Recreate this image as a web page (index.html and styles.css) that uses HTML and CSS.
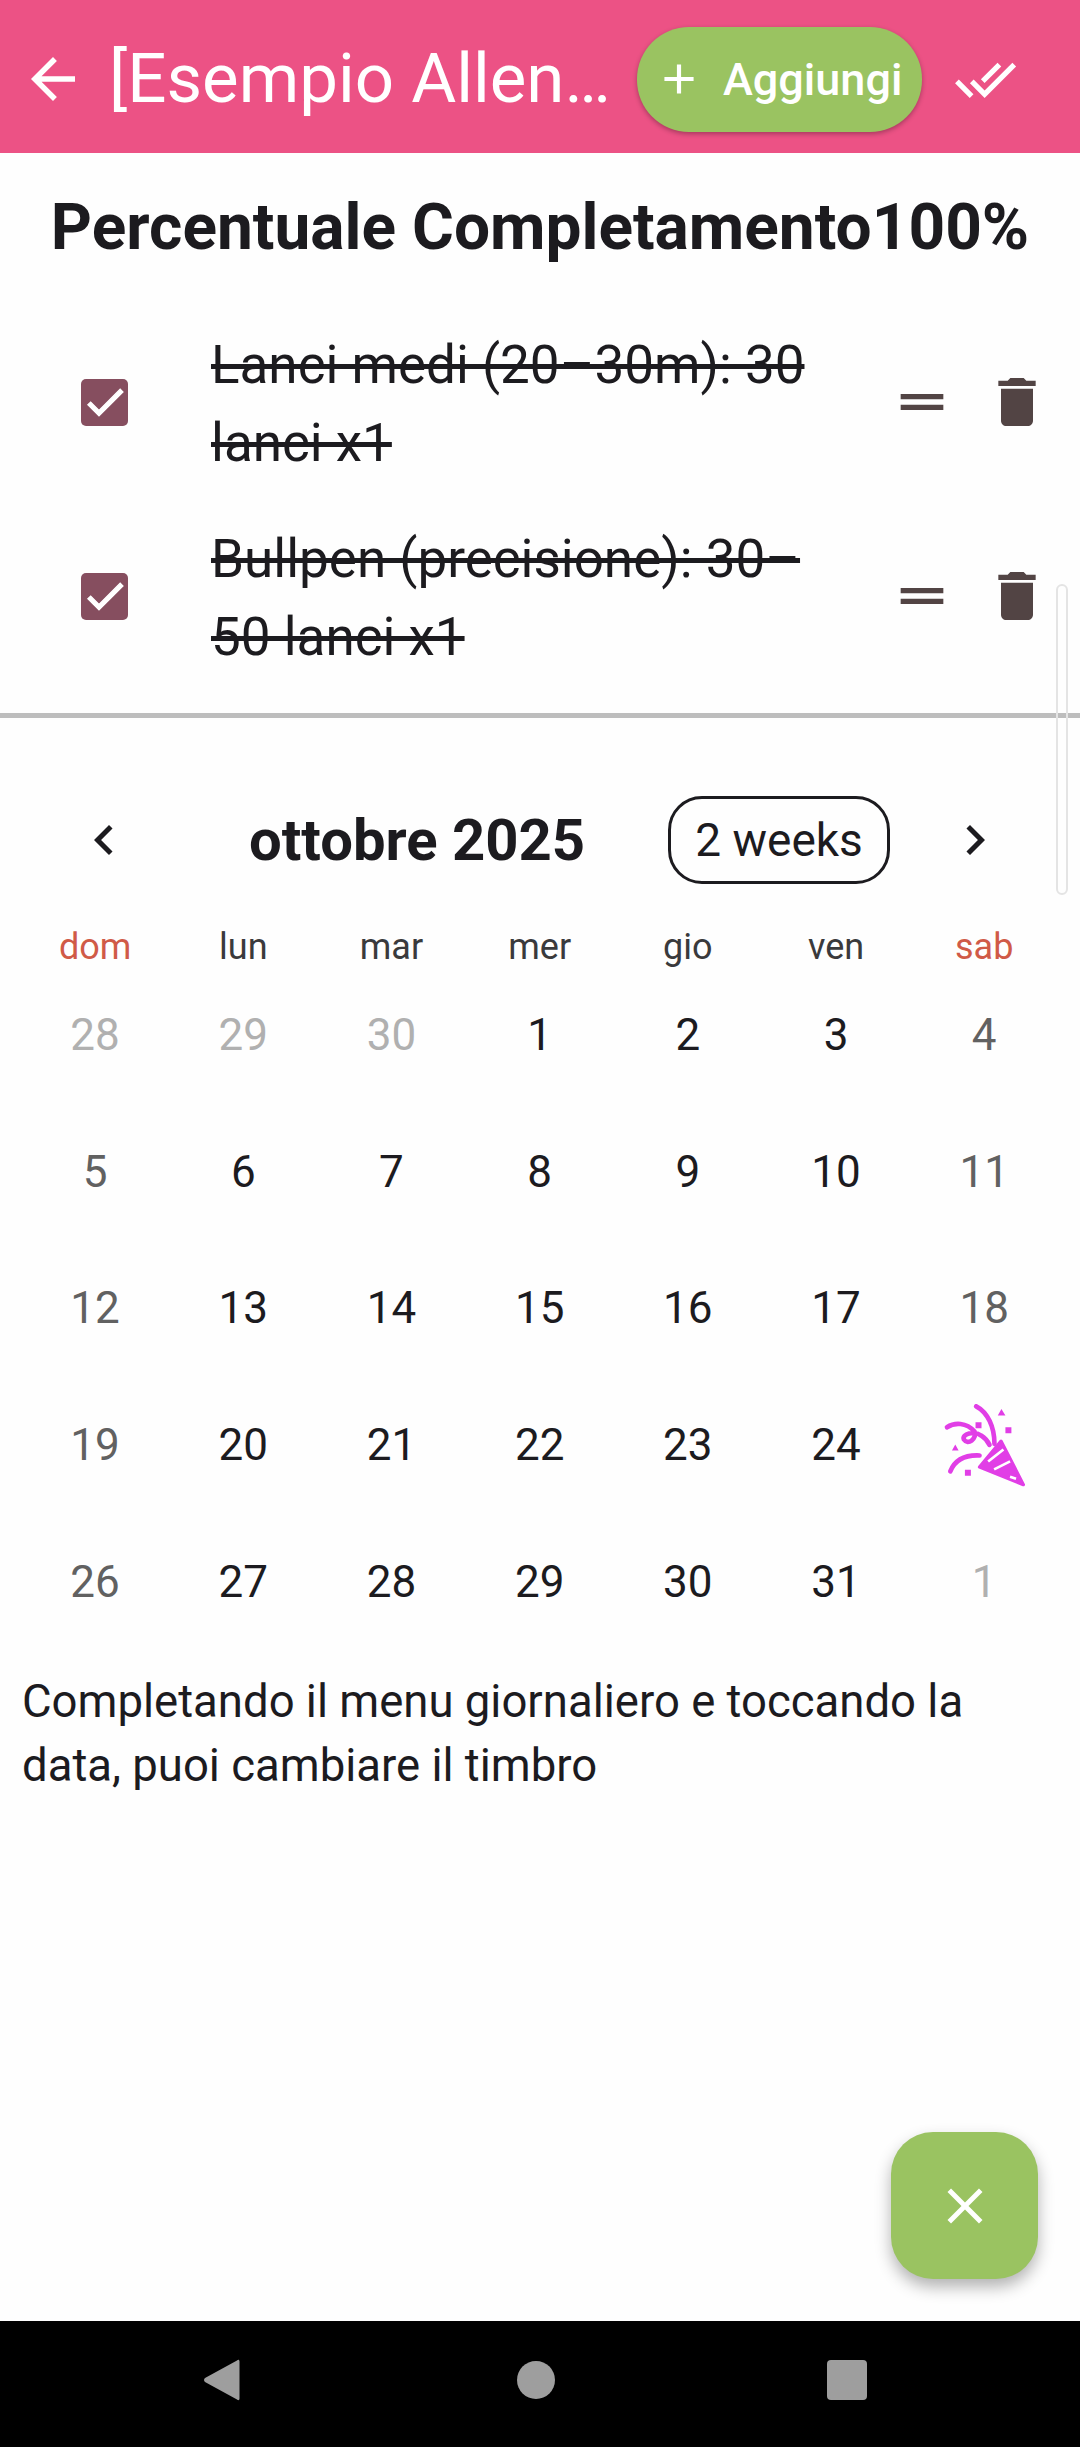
FILE: index.html
```html
<!DOCTYPE html>
<html lang="it">
<head>
    <meta charset="UTF-8">
    <meta name="viewport" content="width=device-width, initial-scale=1.0">
    <title>Esempio Allenamento</title>
    <link rel="stylesheet" href="styles.css">
</head>
<body>
    <div class="screen">
        <header class="app-bar">
            <svg class="back-icon" viewBox="0 0 24 24"><path d="M20 11H7.83l5.59-5.59L12 4l-8 8 8 8 1.41-1.41L7.83 13H20v-2z"/></svg>
            <div class="app-title">[Esempio Allen…</div>
            <div class="add-button">
                <svg class="add-icon" viewBox="0 0 24 24"><path d="M19 13h-6v6h-2v-6H5v-2h6V5h2v6h6v2z"/></svg>
                <span>Aggiungi</span>
            </div>
            <svg class="done-icon" viewBox="0 0 24 24"><path d="M18 7l-1.41-1.41-6.34 6.34 1.41 1.41L18 7zm4.24-1.41L11.66 16.17 7.48 12l-1.41 1.41L11.66 19l12-12-1.42-1.41zM.41 13.41L6 19l1.41-1.41L1.83 12 .41 13.41z"/></svg>
        </header>

        <main class="content">
            <h2 class="progress-title"><span>Percentuale Completamento</span><span>100%</span></h2>

            <div class="task-list">
                <div class="task-row">
                    <div class="checkbox"><svg viewBox="0 0 24 24"><path d="M9 16.17L4.83 12l-1.42 1.41L9 19 21 7l-1.41-1.41z"/></svg></div>
                    <div class="task-text">Lanci medi (20–30m): 30 lanci x1</div>
                    <svg class="row-icon" viewBox="0 0 24 24"><path d="M20 9H4v2h16V9zm0 4H4v2h16v-2z"/></svg>
                    <svg class="row-icon trash" viewBox="0 0 24 24"><path d="M6 19c0 1.1.9 2 2 2h8c1.1 0 2-.9 2-2V7H6v12zM19 4h-3.5l-1-1h-5l-1 1H5v2h14V4z"/></svg>
                </div>
                <div class="task-row">
                    <div class="checkbox"><svg viewBox="0 0 24 24"><path d="M9 16.17L4.83 12l-1.42 1.41L9 19 21 7l-1.41-1.41z"/></svg></div>
                    <div class="task-text">Bullpen (precisione): 30–50 lanci x1</div>
                    <svg class="row-icon" viewBox="0 0 24 24"><path d="M20 9H4v2h16V9zm0 4H4v2h16v-2z"/></svg>
                    <svg class="row-icon trash" viewBox="0 0 24 24"><path d="M6 19c0 1.1.9 2 2 2h8c1.1 0 2-.9 2-2V7H6v12zM19 4h-3.5l-1-1h-5l-1 1H5v2h14V4z"/></svg>
                </div>
            </div>

            <div class="divider"></div>

            <section class="calendar">
                <div class="calendar-header">
                    <svg class="chevron" viewBox="0 0 24 24"><path d="M15.41 7.41L14 6l-6 6 6 6 1.41-1.41L10.83 12z"/></svg>
                    <div class="month-title">ottobre 2025</div>
                    <div class="format-button">2 weeks</div>
                    <svg class="chevron" viewBox="0 0 24 24"><path d="M8.59 16.59L10 18l6-6-6-6-1.41 1.41L13.17 12z"/></svg>
                </div>

                <div class="week-row">
                    <div class="red">dom</div><div>lun</div><div>mar</div><div>mer</div><div>gio</div><div>ven</div><div class="red">sab</div>
                </div>

                <div class="day-grid">
                    <div class="out">28</div><div class="out">29</div><div class="out">30</div><div>1</div><div>2</div><div>3</div><div class="weekend">4</div>
                    <div class="weekend">5</div><div>6</div><div>7</div><div>8</div><div>9</div><div>10</div><div class="weekend">11</div>
                    <div class="weekend">12</div><div>13</div><div>14</div><div>15</div><div>16</div><div>17</div><div class="weekend">18</div>
                    <div class="weekend">19</div><div>20</div><div>21</div><div>22</div><div>23</div><div>24</div>
                    <div>
                        <svg class="stamp" viewBox="130 95 250 250">
                            <path class="stamp-cone" d="M305 207L372 338L240 285Z"/>
                            <path class="stamp-stripe" d="M266 268L312 232M284 292L332 268M332 314L350 320"/>
                            <path class="stamp-line" d="M230 102C265 120 285 165 285 215"/>
                            <path class="stamp-line" d="M142 165C165 150 200 150 225 178C232 200 205 220 193 202C185 185 225 175 245 190C258 198 265 208 270 218"/>
                            <path class="stamp-line" d="M152 298C165 265 195 248 240 250"/>
                            <path class="stamp-bit" d="M228 150h18v18h-18zM318 165h18v18h-18zM196 293h18v18h-18zM306 110l12 20h-23zM167 217l10 18h-20z"/>
                        </svg>
                    </div>
                    <div class="weekend">26</div><div>27</div><div>28</div><div>29</div><div>30</div><div>31</div><div class="out">1</div>
                </div>
            </section>

            <p class="hint">Completando il menu giornaliero e toccando la data, puoi cambiare il timbro</p>

            <!-- sopra il contenuto -->
            <div class="scroll-thumb"></div>
            <div class="fab">
                <svg viewBox="0 0 24 24"><path d="M19 6.41L17.59 5 12 10.59 6.41 5 5 6.41 10.59 12 5 17.59 6.41 19 12 13.41 17.59 19 19 17.59 13.41 12z"/></svg>
            </div>
        </main>

        <nav class="nav-bar">
            <svg viewBox="0 0 40 44"><path d="M36 2.5c1.2-1.2 2.5-.6 2.5 1v37c0 1.600-1.300 2.200-2.500 1L4 24c-1.300-1.200-1.300-2.800 0-4z"/></svg>
            <svg viewBox="0 0 40 44"><circle cx="20" cy="22" r="19"/></svg>
            <svg viewBox="0 0 40 44"><rect x="0" y="2" width="40" height="40" rx="4"/></svg>
        </nav>
    </div>
</body>
</html>
```

FILE: styles.css
```css
body {
    margin: 0;
    font-family: 'Roboto', sans-serif;
    color: #1c1b1f;
    background: #fefefe;
}

.screen {
    width: 1080px;
    height: 2447px;
    display: flex;
    flex-direction: column;
    overflow: hidden;
}

/* barra in alto */
.app-bar {
    height: 153px;
    flex-shrink: 0;
    background: #ec5285;
    display: flex;
    align-items: center;
    padding: 5px 0 0 20px;
    box-sizing: border-box;
    color: white;
}
.back-icon {
    width: 66px;
    height: 66px;
    fill: white;
    flex-shrink: 0;
}
.app-title {
    width: 510px;
    margin-left: 23px;
    font-size: 69px;
    line-height: 80px;
    white-space: nowrap;
    flex-shrink: 0;
}
.add-button {
    width: 285px;
    height: 105px;
    margin-left: 18px;
    background: #9ac361;
    border-radius: 52px;
    box-shadow: 0 2px 5px rgba(0, 0, 0, 0.3);
    display: flex;
    align-items: center;
    padding-left: 17px;
    box-sizing: border-box;
    font-size: 45px;
    font-weight: 500;
    flex-shrink: 0;
}
.add-icon {
    width: 50px;
    height: 50px;
    fill: white;
    margin-right: 19px;
}
.done-icon {
    width: 63px;
    height: 63px;
    fill: white;
    margin-left: 32px;
    flex-shrink: 0;
}

.content {
    flex: 1;
    position: relative;
}

.progress-title {
    margin: 0;
    padding-top: 40px;
    height: 70px;
    display: flex;
    justify-content: center;
    font-size: 64px;
    line-height: 70px;
    font-weight: 700;
    white-space: nowrap;
}

/* lista esercizi */
.task-list {
    padding-top: 42px;
}
.task-row {
    height: 194px;
    display: flex;
    align-items: center;
    padding-left: 81px;
}
.checkbox {
    width: 47px;
    height: 47px;
    border-radius: 5px;
    background: #864e5f;
    flex-shrink: 0;
    display: flex;
    align-items: center;
    justify-content: center;
}
.checkbox svg {
    width: 48px;
    height: 48px;
    fill: white;
    stroke: white;
    stroke-width: 0.6;
    flex-shrink: 0;
}
.task-text {
    width: 610px;
    margin-left: 83px;
    padding-top: 3px;
    font-size: 53px;
    line-height: 78px;
    text-decoration: line-through;
    flex-shrink: 0;
}
.row-icon {
    width: 64px;
    height: 64px;
    fill: #524444;
    margin-left: 69px;
    flex-shrink: 0;
}
.row-icon.trash {
    margin-left: 31px;
}

.divider {
    height: 5px;
    background: #bdbdbd;
    margin-top: 20px;
}

/* calendario */
.calendar {
    padding: 0 21px;
}
.calendar-header {
    height: 88px;
    margin-top: 78px;
    display: flex;
    align-items: center;
}
.chevron {
    width: 60px;
    height: 60px;
    fill: #1c1b1f;
    flex-shrink: 0;
}
.calendar-header .chevron:first-child {
    margin-left: 53px;
}
.month-title {
    margin-left: 115px;
    width: 419px;
    font-size: 58px;
    font-weight: 700;
    white-space: nowrap;
    flex-shrink: 0;
}
.format-button {
    width: 222px;
    height: 88px;
    box-sizing: border-box;
    border: 3px solid #1c1b1f;
    border-radius: 34px;
    display: flex;
    align-items: center;
    justify-content: center;
    font-size: 46px;
    flex-shrink: 0;
}
.format-button + .chevron {
    margin-left: 55px;
}

.week-row {
    display: grid;
    grid-template-columns: repeat(7, 148.2px);
    margin-top: 41px;
    height: 44px;
    line-height: 44px;
    text-align: center;
    font-size: 36px;
    color: #3a3a3c;
}
.week-row .red {
    color: #d05a47;
}

.day-grid {
    display: grid;
    grid-template-columns: repeat(7, 148.2px);
    grid-auto-rows: 136.6px;
    margin-top: -2px;
    text-align: center;
    font-size: 44px;
    color: #1c1b1f;
}
.day-grid > div {
    display: flex;
    align-items: center;
    justify-content: center;
}
.day-grid .out {
    color: #b0b0b0;
}
.day-grid .weekend {
    color: #616161;
}
.stamp {
    width: 83px;
    height: 83px;
}
.stamp-cone {
    fill: #e13ee6;
    stroke: #e13ee6;
    stroke-width: 10;
    stroke-linejoin: round;
}
.stamp-stripe {
    fill: none;
    stroke: white;
    stroke-width: 8;
}
.stamp-line {
    fill: none;
    stroke: #e13ee6;
    stroke-width: 14;
    stroke-linecap: round;
}
.stamp-bit {
    fill: #e13ee6;
}

.hint {
    margin: 20px 22px 0;
    font-size: 45.5px;
    line-height: 64px;
}

.scroll-thumb {
    position: absolute;
    top: 431px;
    left: 1056px;
    width: 12px;
    height: 311px;
    box-sizing: border-box;
    border: 2px solid #e4e4e4;
    border-radius: 6px;
}
.fab {
    position: absolute;
    right: 42px;
    bottom: 42px;
    width: 147px;
    height: 147px;
    border-radius: 42px;
    background: #9ac361;
    box-shadow: 0 8px 16px rgba(0, 0, 0, 0.3);
    display: flex;
    align-items: center;
    justify-content: center;
}
.fab svg {
    width: 60px;
    height: 60px;
    fill: white;
}

/* barra di sistema */
.nav-bar {
    height: 126px;
    box-sizing: border-box;
    padding: 0 0 8px 201px;
    flex-shrink: 0;
    background: #000;
    display: flex;
    align-items: center;
    gap: 275px;
}
.nav-bar svg {
    width: 40px;
    height: 44px;
    fill: #9e9e9e;
    flex-shrink: 0;
}
.nav-bar svg:last-child {
    margin-left: -4px;
}
```
